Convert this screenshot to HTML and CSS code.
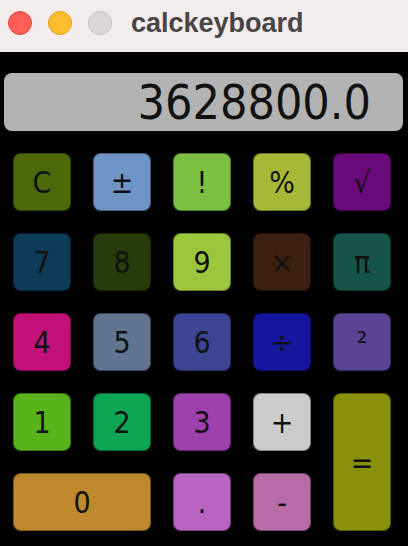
FILE: index.html
```html
<!DOCTYPE html>
<html>
<head>
<meta charset="utf-8">
<link rel="stylesheet" href="styles.css">
</head>
<body>
<div class="window">
  <div class="titlebar">
    <div class="lights">
      <span class="light red"></span>
      <span class="light yellow"></span>
      <span class="light gray"></span>
    </div>
    <div class="title">calckeyboard</div>
  </div>
  <div class="content">
    <div class="display">3628800.0</div>
    <div class="keys">
      <div class="key k-c">C</div>
      <div class="key k-pm">±</div>
      <div class="key k-fact">!</div>
      <div class="key k-pct">%</div>
      <div class="key k-sqrt">√</div>
      <div class="key k-7">7</div>
      <div class="key k-8">8</div>
      <div class="key k-9">9</div>
      <div class="key k-mul">×</div>
      <div class="key k-pi">π</div>
      <div class="key k-4">4</div>
      <div class="key k-5">5</div>
      <div class="key k-6">6</div>
      <div class="key k-div">÷</div>
      <div class="key k-sq">²</div>
      <div class="key k-1">1</div>
      <div class="key k-2">2</div>
      <div class="key k-3">3</div>
      <div class="key k-add">+</div>
      <div class="key k-eq">=</div>
      <div class="key k-0">0</div>
      <div class="key k-dot">.</div>
      <div class="key k-sub">-</div>
    </div>
  </div>
</div>
</body>
</html>
```
FILE: styles.css
```css
html, body {
  margin: 0;
  padding: 0;
  background: #000;
}
.window {
  width: 408px;
  height: 546px;
  background: #000;
  overflow: hidden;
}
.titlebar {
  height: 52px;
  background: #f3ecec;
  display: flex;
  align-items: center;
}
.lights {
  display: flex;
  gap: 16px;
  padding-left: 8px;
  margin-top: -6px;
}
.light {
  width: 24px;
  height: 24px;
  border-radius: 50%;
  box-sizing: border-box;
}
.red { background: #fe5f57; border: 1px solid #e2463f; }
.yellow { background: #febc2e; border: 1px solid #e1a116; }
.gray { background: #dcd7d7; border: 1px solid #c4bfbf; }
.title {
  margin-left: 19px;
  margin-top: -6px;
  font-family: "Liberation Sans", Arial, sans-serif;
  font-weight: bold;
  font-size: 27px;
  color: #4a4545;
}
.content {
  padding: 21px 5px 0 4px;
}
.display {
  height: 58px;
  background: #b3b3b3;
  border-radius: 8px;
  font-family: "DejaVu Sans Condensed", "DejaVu Sans", sans-serif;
  font-stretch: condensed;
  font-size: 48px;
  line-height: 58px;
  text-align: right;
  padding-right: 32px;
  color: #111;
}
.keys {
  margin: 22px 0 0 9px;
  display: grid;
  grid-template-columns: repeat(5, 58px);
  grid-template-rows: repeat(5, 58px);
  gap: 22px;
}
.key {
  border-radius: 8px;
  display: flex;
  align-items: center;
  justify-content: center;
  font-family: "DejaVu Sans Condensed", "DejaVu Sans", sans-serif;
  font-stretch: condensed;
  font-size: 30px;
  color: #111;
  box-shadow: 0 0 0 1px rgba(0,0,0,0.35) inset;
}
.k-c { background: #4b6b0b; }
.k-pm { background: #6f95c6; }
.k-fact { background: #7cc142; }
.k-pct { background: #a7b837; }
.k-sqrt { background: #6a0a7a; }
.k-7 { background: #0d3c58; }
.k-8 { background: #253c0b; }
.k-9 { background: #9ec63c; }
.k-mul { background: #3c2010; }
.k-pi { background: #165548; }
.k-4 { background: #c2127a; }
.k-5 { background: #5f7590; }
.k-6 { background: #3c4494; }
.k-div { background: #1516a0; }
.k-sq { background: #5c4495; }
.k-1 { background: #58b41a; }
.k-2 { background: #0aa654; }
.k-3 { background: #9f40af; }
.k-add { background: #cccccc; }
.k-eq { background: #88900c; grid-row: 4 / span 2; grid-column: 5; }
.k-0 { background: #bd892c; grid-column: 1 / span 2; }
.k-dot { background: #b963c2; }
.k-sub { background: #b86ca8; }
```
